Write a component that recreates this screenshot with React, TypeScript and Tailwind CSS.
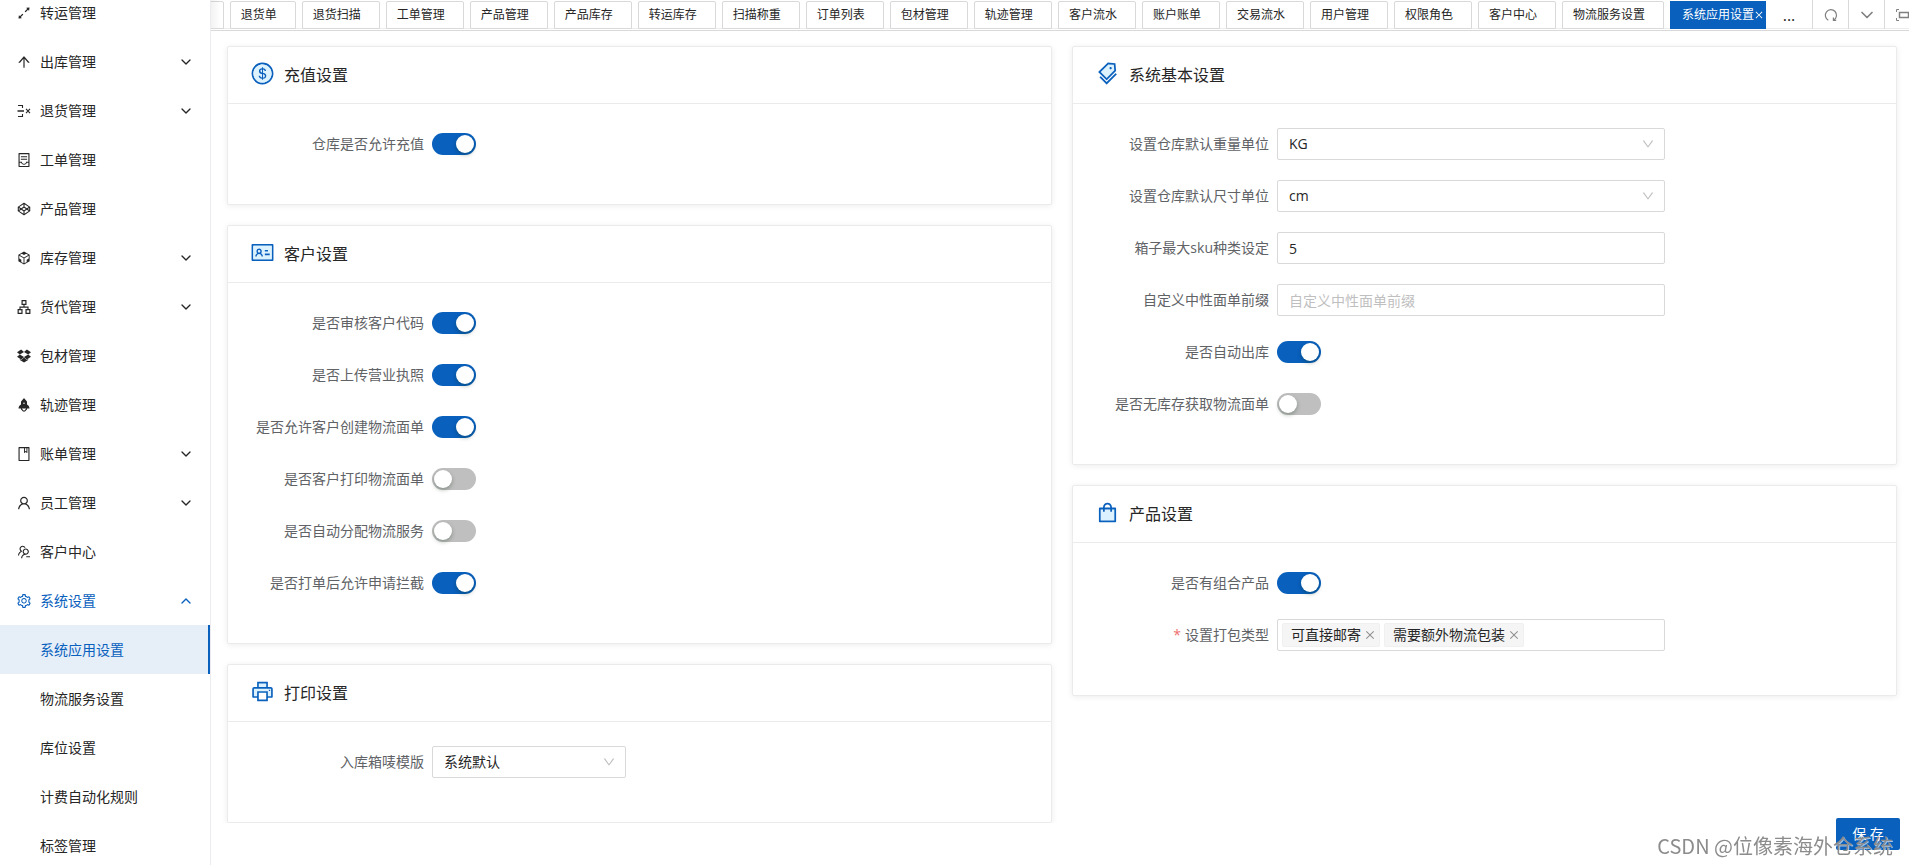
import React, { useState } from 'react';
import { ChevronDown, ChevronUp } from 'lucide-react';
import {
  AiFillRocket,
  AiOutlineApartment,
  AiOutlineArrowUp,
  AiOutlineArrowsAlt,
  AiOutlineBook,
  AiOutlineClose,
  AiOutlineCodeSandbox,
  AiOutlineCodepen,
  AiOutlineContainer,
  AiOutlineDown,
  AiOutlineDropbox,
  AiOutlineSetting,
  AiOutlineUser,
  AiOutlineUsergroupDelete,
  AiTwotoneDollarCircle,
  AiTwotoneIdcard,
  AiTwotonePrinter,
  AiTwotoneShopping,
  AiTwotoneTags,
} from 'react-icons/ai';

const ReturnIcon: React.FC = () => (
  <svg width="14" height="14" viewBox="0 0 14 14" fill="none" stroke="currentColor">
    <path d="M1 1.5h4.5v2.5M1 12.5h4.5V10" strokeWidth="1.1" />
    <path d="M.5 7H7" strokeWidth="1.5" />
    <path d="M9 4.8l4 4.4M13 4.8L9 9.2" strokeWidth="1.1" />
  </svg>
);

const RedoIcon: React.FC = () => (
  <svg width="14" height="14" viewBox="0 0 14 14" fill="none" stroke="currentColor" strokeWidth="1.2">
    <path d="M4.3 12.2A5.6 5.6 0 1 1 9.9 12" />
    <path d="M9.4 9.6v2.8h2.8" />
  </svg>
);

const FullscreenIcon: React.FC = () => (
  <svg width="16" height="14" viewBox="0 0 16 14" fill="none" stroke="currentColor">
    <path d="M.5 4V1.5H3M13 1.5h2.5V4M.5 10v2.5H3M13 12.5h2.5V10" />
    <rect x="3.5" y="4.5" width="9" height="5" strokeWidth="1.5" />
  </svg>
);

interface MenuItem {
  label: string;
  icon: React.ReactNode;
  arrow?: 'down' | 'up';
}

const menu: MenuItem[] = [
  { label: '转运管理', icon: <AiOutlineArrowsAlt size={16} /> },
  { label: '出库管理', icon: <AiOutlineArrowUp size={16} />, arrow: 'down' },
  { label: '退货管理', icon: <ReturnIcon />, arrow: 'down' },
  { label: '工单管理', icon: <AiOutlineContainer size={16} /> },
  { label: '产品管理', icon: <AiOutlineCodepen size={16} /> },
  { label: '库存管理', icon: <AiOutlineCodeSandbox size={16} />, arrow: 'down' },
  { label: '货代管理', icon: <AiOutlineApartment size={16} />, arrow: 'down' },
  { label: '包材管理', icon: <AiOutlineDropbox size={16} /> },
  { label: '轨迹管理', icon: <AiFillRocket size={16} /> },
  { label: '账单管理', icon: <AiOutlineBook size={16} />, arrow: 'down' },
  { label: '员工管理', icon: <AiOutlineUser size={16} />, arrow: 'down' },
  { label: '客户中心', icon: <AiOutlineUsergroupDelete size={16} /> },
  { label: '系统设置', icon: <AiOutlineSetting size={16} />, arrow: 'up' },
];

const subMenu = ['系统应用设置', '物流服务设置', '库位设置', '计费自动化规则', '标签管理'];

const tabs = [
  '退货单',
  '退货扫描',
  '工单管理',
  '产品管理',
  '产品库存',
  '转运库存',
  '扫描称重',
  '订单列表',
  '包材管理',
  '轨迹管理',
  '客户流水',
  '账户账单',
  '交易流水',
  '用户管理',
  '权限角色',
  '客户中心',
  '物流服务设置',
];

const Sidebar: React.FC = () => (
  <aside className="w-[211px] shrink-0 border-r border-[#ebebf0] overflow-hidden">
    <nav className="-mt-3">
      {menu.map((item) => (
        <a
          key={item.label}
          href="#"
          className={`flex items-center h-[49px] px-4 ${item.arrow === 'up' ? 'text-[#0960bd]' : ''}`}
        >
          <span className="flex justify-center w-4 mr-2">{item.icon}</span>
          <span className="flex-1">{item.label}</span>
          {item.arrow === 'down' && <ChevronDown size={16} strokeWidth={2} />}
          {item.arrow === 'up' && <ChevronUp size={16} strokeWidth={2} />}
        </a>
      ))}
      {subMenu.map((label, i) => (
        <a
          key={label}
          href="#"
          className={`flex items-center h-[49px] pl-10 ${
            i === 0 ? 'bg-[#e6eff8] text-[#0960bd] border-r-2 border-[#0960bd]' : ''
          }`}
        >
          {label}
        </a>
      ))}
    </nav>
  </aside>
);

const TabBar: React.FC = () => (
  <header className="shrink-0 h-[31px] border-b border-[#d9d9d9] overflow-hidden">
    <div className="flex h-[29px] text-xs shadow-[inset_0_-1px_0_#ececec]">
      <nav className="relative flex flex-1 min-w-0 justify-end gap-[6px] pt-px overflow-hidden">
        <span className="shrink-0 w-[78px] h-7 border border-[#d9d9d9] rounded-t-xs"></span>
        {tabs.map((tab) => (
          <button
            key={tab}
            className="shrink-0 h-7 pl-[10px] pr-[18px] border border-[#d9d9d9] rounded-t-xs bg-white whitespace-nowrap"
          >
            {tab}
          </button>
        ))}
        <button className="shrink-0 flex items-center h-7 pl-3 pr-[2px] bg-[#0960bd] text-white whitespace-nowrap">
          系统应用设置
          <AiOutlineClose size={10} />
        </button>
        <span className="absolute left-0 top-0 w-[10px] h-7 bg-linear-to-r from-black/5 to-transparent"></span>
      </nav>
      <button className="shrink-0 w-[46px] text-base" aria-label="更多">
        ...
      </button>
      <div className="flex shrink-0 -mr-[11px] text-[#808080]">
        <button className="flex items-center justify-center w-9 border-l border-[#d9d9d9]" aria-label="刷新">
          <RedoIcon />
        </button>
        <button className="flex items-center justify-center w-9 border-l border-[#d9d9d9]" aria-label="展开">
          <ChevronDown size={20} strokeWidth={2} />
        </button>
        <button className="flex items-center pl-[11px] w-9 border-l border-[#d9d9d9]" aria-label="全屏">
          <FullscreenIcon />
        </button>
      </div>
    </div>
  </header>
);

interface CardProps {
  title: string;
  icon: React.ReactNode;
  children: React.ReactNode;
}

const Card: React.FC<CardProps> = ({ title, icon, children }) => (
  <section className="border border-[#ebebeb] rounded-xs bg-white shadow-[0_1px_6px_rgba(0,0,0,0.08)]">
    <div className="flex items-center gap-[9px] h-[57px] pl-[22px] pr-6 border-b border-[#ebebeb]">
      <span className="mb-1 text-[25px] [&_path]:fill-[#0960bd] [&_path[fill^='#D']]:fill-[#dcf2ff] [&_path[fill^='#E']]:fill-[#dcf2ff]">
        {icon}
      </span>
      <h2 className="text-base">{title}</h2>
    </div>
    <div className="px-6 pt-6 pb-6">{children}</div>
  </section>
);

interface FieldProps {
  id: string;
  label: string;
  required?: boolean;
  children: React.ReactNode;
}

const Field: React.FC<FieldProps> = ({ id, label, required, children }) => (
  <div className="flex items-center h-8 mb-5">
    <label htmlFor={id} className="w-[180px] shrink-0 pr-2 text-right whitespace-nowrap text-[#606266]">
      {required && <span className="mr-1 text-[#ed6f6f]">*</span>}
      {label}
    </label>
    {children}
  </div>
);

interface SwitchFieldProps {
  id: string;
  label: string;
  on?: boolean;
}

const SwitchField: React.FC<SwitchFieldProps> = ({ id, label, on = false }) => {
  const [checked, setChecked] = useState(on);

  return (
    <Field id={id} label={label}>
      <input
        id={id}
        type="checkbox"
        role="switch"
        checked={checked}
        onChange={(e) => setChecked(e.target.checked)}
        className="appearance-none flex items-center w-11 h-[22px] px-[2px] rounded-full bg-[#bfbfbf] checked:bg-[#0960bd] checked:justify-end before:w-[18px] before:h-[18px] before:rounded-full before:bg-white before:shadow-[0_2px_4px_rgba(0,35,11,0.3)]"
      />
    </Field>
  );
};

interface SelectFieldProps {
  id: string;
  label: string;
  value: string;
  width: string;
}

const SelectField: React.FC<SelectFieldProps> = ({ id, label, value, width }) => (
  <Field id={id} label={label}>
    <div className={`relative ${width}`}>
      <select id={id} className="appearance-none w-full h-8 px-[11px] border border-[#d9d9d9] rounded-xs bg-white">
        <option>{value}</option>
      </select>
      <AiOutlineDown size={14} className="absolute right-[10px] top-[9px] text-[#bfbfbf] pointer-events-none" />
    </div>
  </Field>
);

const Tag: React.FC<{ text: string }> = ({ text }) => (
  <span className="flex items-center h-6 pl-2 pr-[3px] gap-[3px] border border-[#f0f0f0] rounded-xs bg-[#f5f5f5] whitespace-nowrap">
    {text}
    <button className="text-[#8c8c8c]" aria-label={`移除${text}`}>
      <AiOutlineClose size={12} />
    </button>
  </span>
);

const App: React.FC = () => {
  return (
    <div className="flex h-screen overflow-hidden bg-white text-sm text-[#262626] font-['Open_Sans','Noto_Sans_CJK_SC',sans-serif]">
      <Sidebar />
      <div className="flex flex-col flex-1 min-w-0">
        <TabBar />
        <main className="flex-1 min-h-0 overflow-hidden pt-[15px] pl-4 pr-3">
          <div className="grid grid-cols-2 gap-5 items-start">
            <div className="flex flex-col gap-5">
              <Card title="充值设置" icon={<AiTwotoneDollarCircle />}>
                <SwitchField id="recharge" label="仓库是否允许充值" on />
              </Card>
              <Card title="客户设置" icon={<AiTwotoneIdcard />}>
                <SwitchField id="audit" label="是否审核客户代码" on />
                <SwitchField id="license" label="是否上传营业执照" on />
                <SwitchField id="create-label" label="是否允许客户创建物流面单" on />
                <SwitchField id="print-label" label="是否客户打印物流面单" />
                <SwitchField id="auto-assign" label="是否自动分配物流服务" />
                <SwitchField id="intercept" label="是否打单后允许申请拦截" on />
              </Card>
              <Card title="打印设置" icon={<AiTwotonePrinter />}>
                <SelectField id="template" label="入库箱唛模版" value="系统默认" width="w-1/4" />
              </Card>
            </div>
            <div className="flex flex-col gap-5">
              <Card title="系统基本设置" icon={<AiTwotoneTags />}>
                <SelectField id="weight" label="设置仓库默认重量单位" value="KG" width="w-1/2" />
                <SelectField id="size" label="设置仓库默认尺寸单位" value="cm" width="w-1/2" />
                <Field id="sku" label="箱子最大sku种类设定">
                  <input
                    id="sku"
                    type="text"
                    defaultValue="5"
                    className="w-1/2 h-8 px-[11px] border border-[#d9d9d9] rounded-xs"
                  />
                </Field>
                <Field id="prefix" label="自定义中性面单前缀">
                  <input
                    id="prefix"
                    type="text"
                    placeholder="自定义中性面单前缀"
                    className="w-1/2 h-8 px-[11px] border border-[#d9d9d9] rounded-xs placeholder:text-[#bfbfbf]"
                  />
                </Field>
                <SwitchField id="auto-out" label="是否自动出库" on />
                <SwitchField id="no-stock" label="是否无库存获取物流面单" />
              </Card>
              <Card title="产品设置" icon={<AiTwotoneShopping />}>
                <SwitchField id="combo" label="是否有组合产品" on />
                <Field id="pack" label="设置打包类型" required>
                  <div className="flex items-center gap-1 w-1/2 h-8 px-1 border border-[#d9d9d9] rounded-xs">
                    <Tag text="可直接邮寄" />
                    <Tag text="需要额外物流包装" />
                    <input id="pack" type="text" className="flex-1 min-w-0 outline-none" />
                  </div>
                </Field>
              </Card>
            </div>
          </div>
        </main>
        <footer className="shrink-0 h-[42px]"></footer>
      </div>
      <button className="fixed right-[9px] bottom-[15px] w-16 h-8 rounded-xs bg-[#0960bd] text-white">保 存</button>
      <div className="fixed right-4 bottom-1 text-xl leading-[30px] text-[#8c8c8c] font-['Noto_Sans_CJK_SC',sans-serif] [text-shadow:1px_1px_0_#ffffff99] pointer-events-none">
        CSDN @位像素海外仓系统
      </div>
    </div>
  );
};

export default App;
